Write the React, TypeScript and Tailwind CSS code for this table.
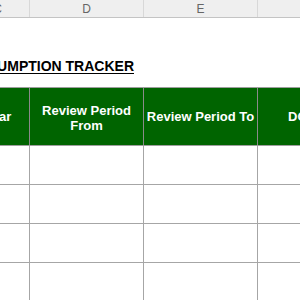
const columns = ["C", "D", "E", "F"];
const widths = ["w-[64px]", "w-[114px]", "w-[114px]", "w-[114px]"];

const App = () => {
  const rows = [1, 2, 3, 4];

  return (
    <div className="w-[300px] h-[300px] overflow-hidden bg-white font-['Liberation_Sans',Arial,sans-serif]">
      {/* sheet column letters */}
      <div className="h-[18px] bg-[#efefef] border-b border-[#c4c4c4] overflow-hidden">
        <div className="flex ml-[-34px] h-full">
          {columns.map((c, i) => (
            <div
              key={c}
              className={`${widths[i]} shrink-0 h-full flex items-center justify-center border-r border-[#d8d8d8] text-[12px] text-[#666666]`}
            >
              {c}
            </div>
          ))}
        </div>
      </div>

      {/* title */}
      <div className="mt-[40px] h-[16px] w-[134px] flex justify-end">
        <span className="whitespace-nowrap text-[14px] leading-[16px] font-bold underline underline-offset-2 text-black">
          CONSUMPTION TRACKER
        </span>
      </div>

      {/* table */}
      <div className="mt-[13px] ml-[-34px] border-t border-[#9e9e9e]">
        <div className="flex h-[58px] bg-[#006400] border-b border-[#9e9e9e] text-white font-bold text-[13px] leading-[15px]">
          <div className={`${widths[0]} shrink-0 flex items-center justify-center text-center border-r border-[#8a8a8a]`}>
            Year
          </div>
          <div className={`${widths[1]} shrink-0 flex items-center justify-center text-center px-2 pt-[2px] border-r border-[#8a8a8a]`}>
            Review Period From
          </div>
          <div className={`${widths[2]} shrink-0 flex items-center justify-center text-center whitespace-nowrap border-r border-[#8a8a8a]`}>
            Review Period To
          </div>
          <div className={`${widths[3]} shrink-0 flex items-center pl-[30px] whitespace-nowrap`}>
            DOB
          </div>
        </div>
        {rows.map((r) => (
          <div key={r} className="flex h-[39px] border-b border-[#a6a6a6]">
            {widths.map((w, i) => (
              <div key={i} className={`${w} shrink-0 border-r border-[#a6a6a6]`} />
            ))}
          </div>
        ))}
      </div>
    </div>
  );
};

export default App;
